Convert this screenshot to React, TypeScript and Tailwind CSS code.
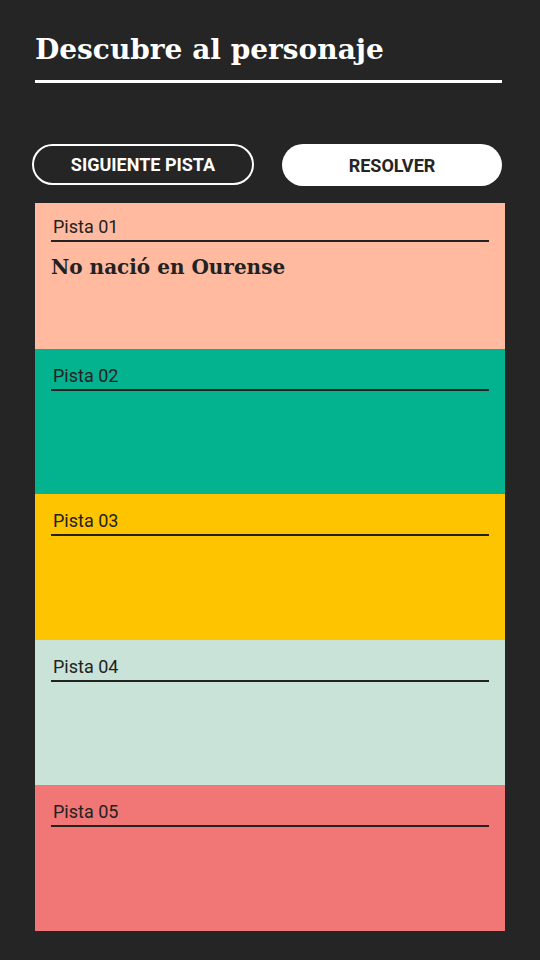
const clues = [
  { id: "01", color: "bg-[#ffbaa0]", text: "No nació en Ourense" },
  { id: "02", color: "bg-[#03b28f]", text: "" },
  { id: "03", color: "bg-[#ffc400]", text: "" },
  { id: "04", color: "bg-[#c9e3d9]", text: "" },
  { id: "05", color: "bg-[#f07775]", text: "" },
];

const slab = "font-['Roboto_Slab','DejaVu_Serif',serif]";

export default function App() {
  return (
    <div className="min-h-[960px] w-[540px] bg-[#252525] px-[35px] pt-[30px] font-['Roboto',sans-serif]">
      <h1
        className={`${slab} border-b-[3px] border-white pb-[10px] text-[28px] leading-[40px] font-bold text-white w-[467px]`}
      >
        Descubre al personaje
      </h1>

      <div className="mt-[61px] -ml-[3px] flex w-[470px] justify-between">
        <button className="h-[41px] w-[222px] rounded-full border-2 border-white text-[18px] font-bold text-white">
          SIGUIENTE PISTA
        </button>
        <button className="h-[42px] w-[220px] rounded-full bg-white text-[18px] font-bold text-[#252525]">
          RESOLVER
        </button>
      </div>

      <div className="mt-[17px] flex w-[470px] flex-col">
        {clues.map((c) => (
          <div
            key={c.id}
            className={`${c.color} h-[145.6px] px-[16px] ${c.text ? "pt-[11px]" : "pt-[14px]"}`}
          >
            <div className="border-b-2 border-[#222] pl-[2px] pb-[1px] text-[18px] leading-[25px] text-[#222]">
              Pista {c.id}
            </div>
            {c.text && (
              <p className={`${slab} mt-[11px] text-[20px] leading-[28px] font-bold text-[#222]`}>
                {c.text}
              </p>
            )}
          </div>
        ))}
      </div>
    </div>
  );
}
